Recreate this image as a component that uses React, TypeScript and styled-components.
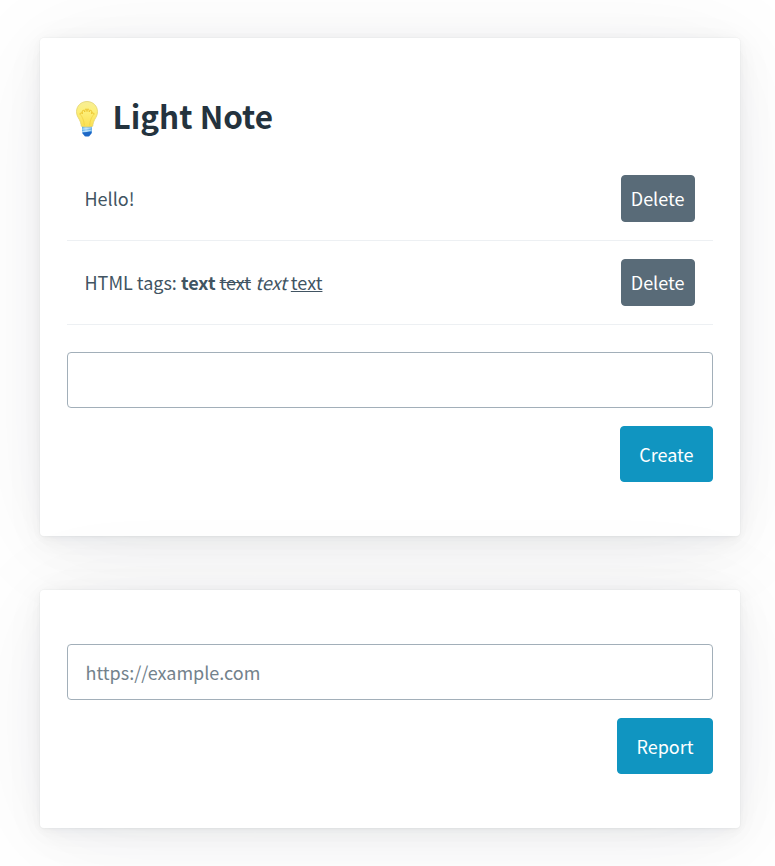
import React from "react";
import styled, { createGlobalStyle } from "styled-components";

const GlobalStyle = createGlobalStyle`
  *, *::before, *::after { box-sizing: border-box; }
  html { font-size: 18px; background: #fff; overflow: hidden; }
  body {
    margin: 0;
    color: #415462;
    font-family: "Noto Sans CJK JP", sans-serif;
    font-weight: 400;
    line-height: 1.5;
  }
`;

const Page = styled.main`
  width: 700px;
  margin: 38px 0 0 40px;
`;

const Card = styled.article`
  margin-bottom: 54px;
  padding: 54px 27px;
  border-radius: 4px;
  background: #fff;
  box-shadow:
    0 0.029rem 0.174rem rgba(27, 40, 50, 0.01698),
    0 0.067rem 0.402rem rgba(27, 40, 50, 0.02),
    0 0.125rem 0.75rem rgba(27, 40, 50, 0.024),
    0 0.225rem 1.35rem rgba(27, 40, 50, 0.03),
    0 0.417rem 2.502rem rgba(27, 40, 50, 0.04),
    0 0.5rem 6rem rgba(27, 40, 50, 0.06),
    0 0 0 0.0625rem rgba(27, 40, 50, 0.015);
`;

const Title = styled.h1`
  display: flex;
  align-items: center;
  height: 45px;
  margin: 0 0 20px;
  color: #24333e;
  font-size: 31.5px;
  font-weight: 700;
  line-height: 45px;
  white-space: nowrap;
`;

const TitleText = styled.span`
  padding-top: 2px;
`;

const Bulb = styled.svg`
  flex: none;
  width: 22px;
  height: 36px;
  margin: 8px 15px 0 8.5px;
`;

const NoteList = styled.div`
  margin-bottom: 27px;
`;

const NoteRow = styled.div`
  display: flex;
  align-items: center;
  justify-content: space-between;
  padding: 18px 18px 18px 17.5px;
  border-bottom: 1px solid #edf0f3;
`;

const Form = styled.form`
  display: flex;
  flex-direction: column;
  align-items: flex-end;
  gap: 18px;
`;

const Field = styled.input`
  width: 100%;
  height: 56px;
  padding: 0 17.5px;
  border: 1px solid #a2afb9;
  border-radius: 4px;
  outline: none;
  background: #fff;
  color: #415462;
  font: inherit;
  &::placeholder { color: #73828c; opacity: 1; }
`;

const Button = styled.button<{ $kind: "primary" | "secondary" }>`
  padding: ${(p) => (p.$kind === "primary" ? "13.5px 18.5px" : "9px 9.5px 9px 8.5px")};
  border: 1px solid ${(p) => (p.$kind === "primary" ? "#1095c1" : "#596b78")};
  border-radius: 4px;
  background: ${(p) => (p.$kind === "primary" ? "#1095c1" : "#596b78")};
  color: #fff;
  font: inherit;
`;

const LightBulb = () => (
  <Bulb viewBox="0 0 22 36" aria-label="Light bulb">
    <defs>
      <linearGradient id="glass" x1="0" y1="0" x2="0" y2="1">
        <stop offset="0" stopColor="#f7ee96" />
        <stop offset="0.35" stopColor="#fdf07c" />
        <stop offset="1" stopColor="#fbe052" />
      </linearGradient>
      <linearGradient id="base" x1="0" y1="0" x2="1" y2="0">
        <stop offset="0" stopColor="#5cadea" />
        <stop offset="0.4" stopColor="#a5d6f8" />
        <stop offset="1" stopColor="#4d9fe2" />
      </linearGradient>
    </defs>
    <path d="M6 25h10v4.500l-.6 2.500H6.600L6 29.500z" fill="url(#base)" />
    <path d="M6.200 30.800l9.600-1.700M6.200 28.200l9.600-1.400" stroke="#d3edfd" strokeWidth="0.700" />
    <path d="M6.300 31.600l9.400-1.100v1.800l-1.700 2c-.4.800-1 1.200-1.700 1.200H9.700c-.7 0-1.300-.4-1.700-1.200l-1.700-2z" fill="#1c67c6" />
    <path
      d="M11 .5C5 .5.500 5 .500 10.700c0 3.500 1.500 5.500 2.800 7.800 1.200 2.200 1.700 4.300 2 6.700 1.700.8 9.700.8 11.400 0 .3-2.400.8-4.500 2-6.700 1.300-2.300 2.800-4.300 2.800-7.800C21.500 5 17 .5 11 .5z"
      fill="url(#glass)"
      stroke="#e2d36f"
      strokeWidth="0.800"
    />
    <g fill="none" stroke="#edc52f" strokeWidth="1" strokeLinecap="round" strokeLinejoin="round">
      <path d="M4 13c.3-1.600 2-1.800 2.300-.2.300-1.200-.5-2.600.4-3.300 1-.7 1.900.5 2 1.500.2-1.300 0-2.700 1.200-3 1.300-.3 1.100 1.600 1.100 2.500 0-.9-.2-2.800 1.100-2.500 1.200.3 1 1.700 1.200 3 .1-1 1-2.200 2-1.500.9.700.1 2.100.4 3.300.3-1.600 2-1.400 2.300.2" />
      <path d="M4 13c2.500 3 4 6.500 4.300 11M18 13c-2.500 3-4 6.500-4.300 11" opacity="0.500" />
    </g>
  </Bulb>
);

const notes: { id: string; body: React.ReactNode }[] = [
  { id: "hello", body: "Hello!" },
  {
    id: "tags",
    body: (
      <>
        HTML tags: <b>text</b> <s>text</s> <i>text</i> <u>text</u>
      </>
    ),
  },
];

export default function App() {
  return (
    <>
      <GlobalStyle />
      <Page>
        <Card>
          <Title>
            <LightBulb />
            <TitleText>Light Note</TitleText>
          </Title>
          <NoteList>
            {notes.map((note) => (
              <NoteRow key={note.id}>
                <span>{note.body}</span>
                <Button $kind="secondary" type="button">Delete</Button>
              </NoteRow>
            ))}
          </NoteList>
          <Form>
            <Field aria-label="Note" />
            <Button $kind="primary" type="button">Create</Button>
          </Form>
        </Card>
        <Card>
          <Form>
            <Field aria-label="URL" placeholder="https://example.com" />
            <Button $kind="primary" type="button">Report</Button>
          </Form>
        </Card>
      </Page>
    </>
  );
}
